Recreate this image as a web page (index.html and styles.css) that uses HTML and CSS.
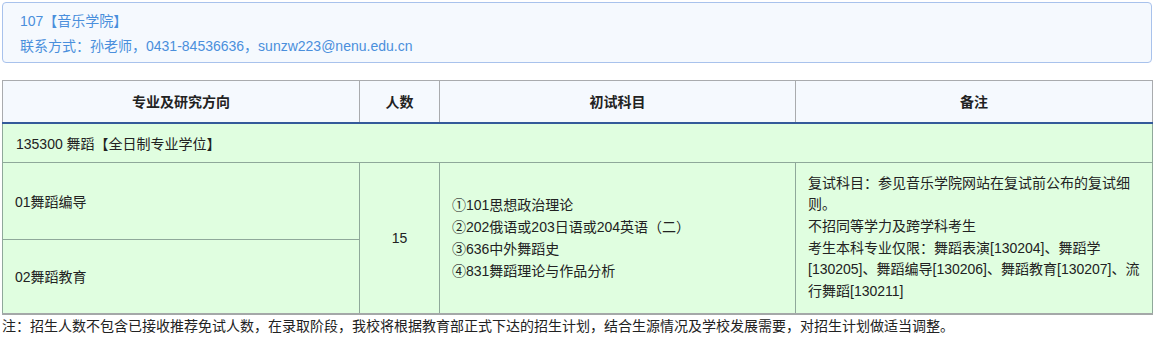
FILE: index.html
```html
<!DOCTYPE html>
<html lang="zh-CN">
<head>
<meta charset="utf-8">
<link rel="stylesheet" href="styles.css">
</head>
<body>
<div class="page">
  <div class="info">
    <div class="info-line">107【音乐学院】</div>
    <div class="info-line">联系方式：孙老师，0431-84536636，sunzw223@nenu.edu.cn</div>
  </div>
  <table class="plan">
    <colgroup>
      <col class="c1"><col class="c2"><col class="c3"><col class="c4">
    </colgroup>
    <thead>
      <tr class="head">
        <th>专业及研究方向</th>
        <th>人数</th>
        <th>初试科目</th>
        <th>备注</th>
      </tr>
    </thead>
    <tbody>
      <tr class="major">
        <td colspan="4">135300 舞蹈【全日制专业学位】</td>
      </tr>
      <tr class="r1">
        <td>01舞蹈编导</td>
        <td rowspan="2" class="num">15</td>
        <td rowspan="2" class="exam">①101思想政治理论<br>②202俄语或203日语或204英语（二）<br>③636中外舞蹈史<br>④831舞蹈理论与作品分析</td>
        <td rowspan="2" class="note">复试科目：参见音乐学院网站在复试前公布的复试细则。<br>不招同等学力及跨学科考生<br>考生本科专业仅限：舞蹈表演[130204]、舞蹈学[130205]、舞蹈编导[130206]、舞蹈教育[130207]、流行舞蹈[130211]</td>
      </tr>
      <tr class="r2">
        <td>02舞蹈教育</td>
      </tr>
    </tbody>
  </table>
  <p class="foot">注：招生人数不包含已接收推荐免试人数，在录取阶段，我校将根据教育部正式下达的招生计划，结合生源情况及学校发展需要，对招生计划做适当调整。</p>
</div>
</body>
</html>
```

FILE: styles.css
```css
* { box-sizing: border-box; }
html, body { margin: 0; padding: 0; background: #fff; }
body {
  font-family: "Liberation Sans", "Noto Sans CJK SC", sans-serif;
  font-size: 14px;
  color: #222;
}
.page { padding: 2px 2px 0 2px; width: 1154px; }
.info {
  width: 1150px;
  height: 61px;
  border: 1px solid #a8c2ec;
  border-radius: 4px;
  background: #f5f9fe;
  padding: 6px 17px 0;
  color: #4a8fdc;
}
.info-line { line-height: 25px; height: 25px; }
.plan {
  margin-top: 17px;
  width: 1150px;
  border-collapse: collapse;
  table-layout: fixed;
  border: 1px solid #a9abae;
  border-bottom: 2px solid #a4a8a8;
}
.c1 { width: 357px; }
.c2 { width: 80px; }
.c3 { width: 356px; }
.c4 { width: 357px; }
.head th {
  height: 42px;
  background: #f5f9fe;
  border: 1px solid #a9abae;
  border-bottom: 2px solid #345a9a;
  font-weight: bold;
  color: #222;
  text-align: center;
  padding: 0;
}
tbody td {
  background: #e0fee0;
  border: 1px solid #8fa89a;
  padding: 0 12px;
  vertical-align: middle;
}
.plan tbody tr:first-child td { border-top: none; }
.major td { height: 40px; padding-left: 13px; }
.r1 td:first-child { height: 77px; }
.r2 td { height: 74px; }
.num { text-align: center; }
.exam { line-height: 22px; padding-top: 0; }
.note { line-height: 21.7px; padding: 2px 12px 2px 12px; }
.foot { margin: 1px 0 0; line-height: 20px; }
```
